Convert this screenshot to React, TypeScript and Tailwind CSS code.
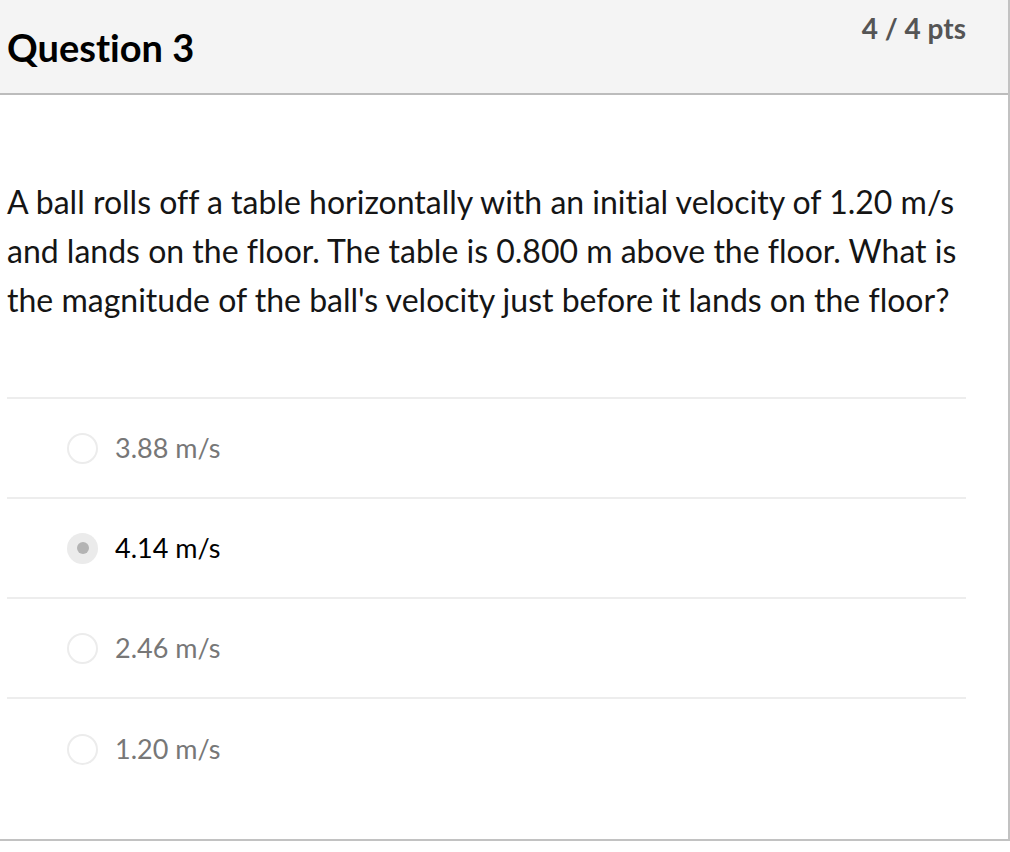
import React from "react";

const answers = [
  { label: "3.88 m/s", selected: false },
  { label: "4.14 m/s", selected: true },
  { label: "2.46 m/s", selected: false },
  { label: "1.20 m/s", selected: false },
];

export default function App() {
  return (
    <div
      className="w-[1010px] h-[852px] bg-white [font-variant-ligatures:none]"
      style={{ fontFamily: "Lato, 'Open Sans', sans-serif" }}
    >
      <div className="w-[1010px] border-r-2 border-b-2 border-[#c2c2c2] bg-white">
        <div className="h-[95px] bg-[#f4f4f4] border-b-2 border-[#bcbcbc] flex justify-between pl-[7px] pr-[42px]">
          <div className="pt-[24px] text-[38px] font-bold text-black leading-[46px]">Question 3</div>
          <div className="pt-[11px] text-[28px] font-bold text-[#555555] leading-[34px]">4 / 4 pts</div>
        </div>
        <div className="pl-[7px] pr-[42px]">
          <p className="pt-[82px] text-[32px] leading-[49px] text-[#151515] whitespace-nowrap">
            A ball rolls off a table horizontally with an initial velocity of 1.20 m/s
            <br />
            and lands on the floor. The table is 0.800 m above the floor. What is
            <br />
            the magnitude of the ball's velocity just before it lands on the floor?
          </p>
          <div className="mt-[73px] border-t-2 border-[#ededed]">
            {answers.map((a, i) => (
              <div
                key={a.label}
                className={`h-[100px] flex items-center pl-[60px] ${i < answers.length - 1 ? "border-b-2 border-[#ededed]" : ""}`}
              >
                {a.selected ? (
                  <div className="w-[31px] h-[31px] rounded-full bg-[#ebebeb] flex items-center justify-center">
                    <div className="w-[12px] h-[12px] rounded-full bg-[#b3b3b3]" />
                  </div>
                ) : (
                  <div className="w-[31px] h-[31px] rounded-full border-2 border-[#ececec] bg-white" />
                )}
                <span className={`ml-[17px] text-[27px] leading-[32px] ${a.selected ? "text-black" : "text-[#777777]"}`}>
                  {a.label}
                </span>
              </div>
            ))}
          </div>
          <div className="h-[40px]" />
        </div>
      </div>
    </div>
  );
}
